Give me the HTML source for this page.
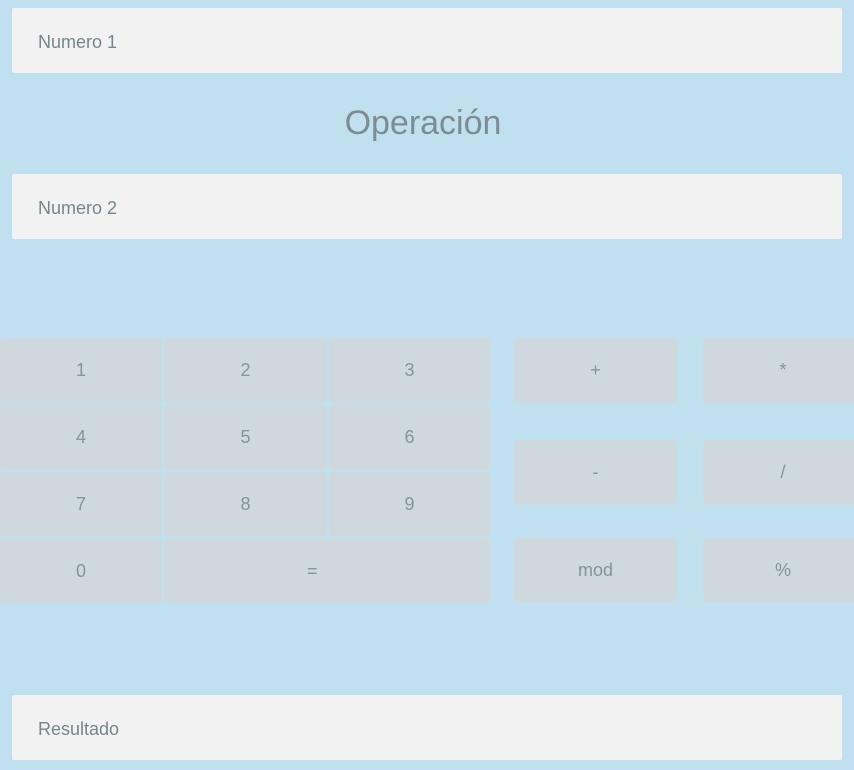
<!DOCTYPE html>
<html><head><style>
body{margin:0;width:854px;height:770px;background:#c0e0ef;font-family:"Liberation Sans",sans-serif;position:relative;overflow:hidden}
.in{position:absolute;left:12px;width:830px;height:65px;background:#f2f2f2;border-radius:2px;color:#76868c;font-size:18px;line-height:69px;padding-left:26px;box-sizing:border-box}
.t{position:absolute;top:104px;left:0;width:846px;text-align:center;font-size:34px;color:#7d8c92}
.b{position:absolute;background:#cfd8dc;border-radius:4px;color:#83959b;font-size:18px;display:flex;align-items:center;justify-content:center}
</style></head><body>
<div class="in" style="top:8px">Numero 1</div>
<div class="t">Operación</div>
<div class="in" style="top:174px">Numero 2</div>
<div class="b" style="left:0;top:338px;width:162px;height:65px">1</div>
<div class="b" style="left:164px;top:338px;width:163px;height:65px">2</div>
<div class="b" style="left:329px;top:338px;width:161px;height:65px">3</div>
<div class="b" style="left:0;top:405px;width:162px;height:65px">4</div>
<div class="b" style="left:164px;top:405px;width:163px;height:65px">5</div>
<div class="b" style="left:329px;top:405px;width:161px;height:65px">6</div>
<div class="b" style="left:0;top:472px;width:162px;height:65px">7</div>
<div class="b" style="left:164px;top:472px;width:163px;height:65px">8</div>
<div class="b" style="left:329px;top:472px;width:161px;height:65px">9</div>
<div class="b" style="left:0;top:539px;width:162px;height:64px">0</div>
<div class="b" style="left:164px;top:539px;width:326px;height:64px;justify-content:flex-start;padding-left:143px;box-sizing:border-box">=</div>
<div class="b" style="left:514px;top:338px;width:163px;height:65px">+</div>
<div class="b" style="left:514px;top:440px;width:163px;height:65px">-</div>
<div class="b" style="left:514px;top:538px;width:163px;height:64px">mod</div>
<div class="b" style="left:703px;top:338px;width:160px;height:65px">*</div>
<div class="b" style="left:703px;top:440px;width:160px;height:65px">/</div>
<div class="b" style="left:703px;top:538px;width:160px;height:64px">%</div>
<div class="in" style="top:695px">Resultado</div>
</body></html>
